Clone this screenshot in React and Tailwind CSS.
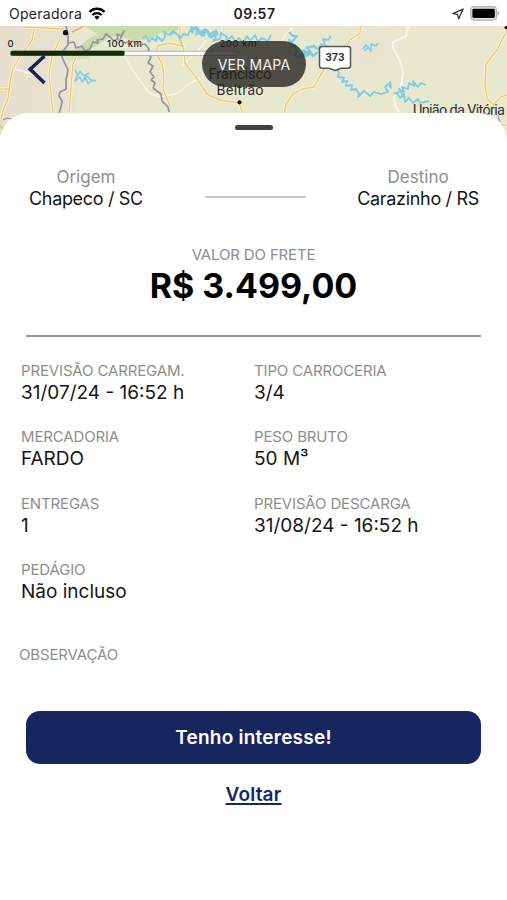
const details = [
  { label: "PREVISÃO CARREGAM.", value: "31/07/24 - 16:52 h" },
  { label: "TIPO CARROCERIA", value: "3/4" },
  { label: "MERCADORIA", value: "FARDO" },
  { label: "PESO BRUTO", value: "50 M³" },
  { label: "ENTREGAS", value: "1" },
  { label: "PREVISÃO DESCARGA", value: "31/08/24 - 16:52 h" },
  { label: "PEDÁGIO", value: "Não incluso" },
];

const highways = [
  "M24 27L45 28L64 29",
  "M34 29L32 40L28 46L21 55L13 68L10 82L8 99L4 108L1 119",
  "M0 89H10",
  "M60 39L52 56L49 75L51 94L53 114",
  "M79 50L73 64L71 87L69 114",
  "M181 20L179 41L183 46L169 43L157 46L157 55L162 64L164 76L163 89L170 106",
  "M181 40L184 51L185 63L198 80L207 94L220 100L239 103L243 113",
  "M330 63L323 71L314 87L302 89L293 94L286 104L284 114",
  "M361 22L360 33L350 40L346 48",
  "M507 30L497 50L486 64L485 84L487 98L493 105L501 97L507 95",
  "M507 125H501",
];

function StatusBar() {
  return (
    <div className="h-[26px] pt-[1px] bg-white grid grid-cols-3 items-center pl-[9px] pr-[7px] text-[#1c1c1c]">
      <div className="flex items-center gap-[6px]">
        <span className="text-[14px] tracking-[0.02em]">Operadora</span>
        <svg width="18" height="13" viewBox="0 0 18 14" fill="none" stroke="#000" strokeWidth="2.5">
          <path d="M0.9 5.2 A11.6 11.6 0 0 1 17.1 5.2" />
          <path d="M4 8.6 A7.2 7.2 0 0 1 14 8.6" />
          <path d="M9 13.8 L6.2 10.9 A4 4 0 0 1 11.8 10.9 Z" fill="#000" stroke="none" />
        </svg>
      </div>
      <span className="text-center text-[14px] font-semibold tracking-[0.035em]">09:57</span>
      <div className="flex items-center justify-end gap-[6px]">
        <svg width="12" height="12" viewBox="0 0 12 12" fill="none" stroke="#333" strokeWidth="1.3" strokeLinejoin="round">
          <path d="M11.2 1 L0.9 5.6 L5.5 6.4 L6.7 10.8 Z" />
        </svg>
        <svg width="30" height="15" viewBox="0 0 30 15">
          <rect x="0.8" y="0.8" width="25.6" height="13.2" rx="3.4" fill="#e9e9e9" stroke="#b5b5b5" strokeWidth="1.4" />
          <rect x="2.4" y="2.7" width="22.4" height="9.4" rx="1.4" fill="#000" />
          <path d="M27.6 4.8 Q31 7.4 27.6 10 Z" fill="#a8a8a8" />
        </svg>
      </div>
    </div>
  );
}

function RouteMap() {
  return (
    <svg className="block" width="507" height="114" viewBox="0 26 507 114" fontFamily="Roboto, sans-serif">
      <defs>
        <linearGradient id="soil" x1="0" x2="1" y1="0" y2="0">
          <stop offset="0" stopColor="#e7decd" />
          <stop offset="0.75" stopColor="#e8e1cf" />
          <stop offset="1" stopColor="#e8e8cf" />
        </linearGradient>
        <radialGradient id="hill">
          <stop offset="0" stopColor="#e8e1d1" />
          <stop offset="1" stopColor="#e8e8cf" />
        </radialGradient>
      </defs>
      <rect y="26" width="507" height="114" fill="#e8e8cf" />
      <rect y="26" width="84" height="114" fill="url(#soil)" />
      <ellipse cx="370" cy="50" rx="42" ry="34" fill="url(#hill)" />
      <path d="M84 26H184L176 31L160 33L149 39L141 40L134 43L126 38L118 36L108 38L98 45L86 51L76 50L88 39L98 34Z" fill="#cadbac" />
      <path d="M64 52L78 50L90 55L88 59L66 60Z" fill="#d5e2b8" />

      {/* secondary roads */}
      <g fill="none" stroke="#f8f6ee" strokeWidth="1.4" strokeLinejoin="round">
        <path d="M15 69L32 74L52 86" />
        <path d="M124 55L132 69L141 82L149 93L160 97L176 94L192 82L200 78" />
        <path d="M182 66L200 48L206 40" />
        <path d="M292 28L283 38L281 44L300 70" />
        <path d="M408 26L406 36L393 42L393 48L400 60L403 72L401 88L394 97L396 107L401 114" strokeWidth="2" />
      </g>

      {/* highways, light casing under a yellow core */}
      <g fill="none" stroke="#faf5e4" strokeWidth="3" strokeLinejoin="round">
        {highways.map((d) => <path key={d} d={d} />)}
      </g>
      <g fill="none" stroke="#f2c969" strokeWidth="1.4" strokeLinejoin="round">
        {highways.map((d) => <path key={d} d={d} />)}
      </g>
      <path d="M72 32L84 26" fill="none" stroke="#eba680" strokeWidth="1.5" />

      {/* rivers */}
      <g fill="none" stroke="#7fcbe4" strokeWidth="1.8" strokeLinejoin="round">
        <path d="M143 38L146 36L149 42L152 38L156 41L157 36L162 41L165 37L164 32L169 35L173 31L177 34" />
        <path d="M170 35L174 32L178 35L180 39L183 34L188 35L190 30L193 33L191 27L197 29L196 35L201 31L204 36L206 29L209 36L213 32L216 38L213 41L220 39L221 33L227 37L226 42L232 36L235 41L239 38L243 43L247 36L250 41L255 35L258 42L262 38L268 41L271 35" />
        <path d="M192 31L196 27L202 35L204 30L208 32L211 37L217 34L215 30" strokeWidth="3" />
        <path d="M289 32L293 36L297 36L292 42L289 40L291 47L295 45L297 52L294 55L302 57L304 50L308 55L312 52" strokeWidth="2.2" />
        <path d="M303 50L306 56L309 50L313 56L318 52M306 48L314 46L317 49" strokeWidth="2.4" />
        <path d="M318 50L321 44L325 45L323 39L328 40L331 36" />
        <path d="M75 70L78 75L75 81L80 77L82 82L86 78L88 84L92 80L96 81M76 78L80 71L84 76L89 73M83 79L87 76L93 82" strokeWidth="1.5" />
        <path d="M363 49L366 45L371 51L371 44L376 46L378 43M364 51L369 47" strokeWidth="1.5" />
        <path d="M337 69L339 73L338 77L344 78L342 82L347 81L346 86L352 85L351 90L356 89L359 94L358 97L364 91L370 96L374 92L381 94L388 92L385 87L388 84L391 88L390 81" />
        <path d="M393 93L397 94L400 90L404 92L402 87L408 89L409 83L414 86L413 81L418 87L421 83L426 85" />
        <path d="M396 92L400 98L404 94L405 102L409 98L413 103L418 99L420 103L429 101M399 88L405 99" />
      </g>

      {/* state borders */}
      <g fill="none" stroke="#94929a" strokeWidth="1.7" strokeLinejoin="round">
        <path d="M66 26L68 34L68 45L63 51L62 57L68 70L66 80L66 89L60 92L59 96L62 101L61 107L59 113" />
        <path d="M68 43L74 42L76 48L82 46L85 51L90 49L93 42L98 43L97 40L103 39L106 34L110 37L113 40L118 39L117 34L121 36L124 31L120 40L116 44" />
        <path d="M120 40L126 43L133 41L138 45L145 44L149 49L147 53L151 57L148 63L153 66L150 72L154 77L151 80L155 83L153 88L161 94L162 101L168 107L169 112" />
        <path d="M3 120L7 118L12 119M498 116L500 122" strokeWidth="1.2" />
      </g>

      <path d="M0 126L3 129" stroke="#c7dc50" strokeWidth="2" />
      <circle cx="65.5" cy="32.7" r="2.6" fill="#111" />
      <circle cx="239.5" cy="102.3" r="2.1" fill="#111" />
      <circle cx="506" cy="27.5" r="1.5" fill="#111" />

      <g fill="#2f2f2b" fontSize="14.5" stroke="#f1f0dd" strokeWidth="1" paintOrder="stroke" textAnchor="middle">
        <text x="240" y="78.5" fill="#000" textLength="63">Francisco</text>
        <text x="240" y="95" textLength="47">Beltrão</text>
        <text x="459" y="115" textLength="92">União da Vitória</text>
      </g>

      {/* highway shield */}
      <path d="M322 46.5H348Q350.5 46.5 350.5 49V66Q350.5 68 348 68.2L341 68.2L335 70.5L329 68.2L322 68.2Q319.5 68 319.5 66V49Q319.5 46.5 322 46.5Z" fill="#fff" stroke="#55555a" strokeWidth="1.5" />
      <text x="335" y="61.3" fontSize="11" fontWeight="700" fill="#333" textAnchor="middle" textLength="19">373</text>

      {/* scale bar */}
      <rect x="11" y="51.2" width="227" height="4.2" rx="2" fill="#fff" stroke="#aaaca4" strokeWidth="0.9" />
      <rect x="10.5" y="50.8" width="114" height="5" rx="1.5" fill="#122b0c" />
      <g fontFamily="Inter, sans-serif" fontSize="9.5" fontWeight="500" fill="#20231d" stroke="#eceddb" strokeWidth="0.8" paintOrder="stroke">
        <text x="7.5" y="47">0</text>
        <text x="107" y="47" textLength="35">100 km</text>
        <text x="219.5" y="47" textLength="37">200 km</text>
      </g>
    </svg>
  );
}

function Place({ label, name }) {
  return (
    <div className="text-center leading-[21px]">
      <p className="text-[17px] text-[#8e8e8e]">{label}</p>
      <p className="text-[18px] tracking-[-0.018em] text-[#151515]">{name}</p>
    </div>
  );
}

function Detail({ label, value }) {
  return (
    <div className="h-[66.4px]">
      <p className="text-[15px] leading-[21px] tracking-[-0.01em] text-[#8e8e8e]">{label}</p>
      <p className="text-[19px] leading-[23px] text-[#151515]">{value}</p>
    </div>
  );
}

export default function App() {
  return (
    <div className="relative w-[507px] h-[900px] overflow-hidden bg-white font-['Inter',sans-serif]">
      <StatusBar />
      <RouteMap />

      {/* Map controls */}
      <button aria-label="Voltar" className="absolute left-[26px] top-[54px]">
        <svg width="22" height="32" viewBox="0 0 22 32" fill="none" stroke="#14235c" strokeWidth="3.6">
          <path d="M18.5 2L4.200 15.2L18.5 29" />
        </svg>
      </button>
      <button className="absolute left-[202px] top-[41px] w-[104px] h-[46px] rounded-full bg-[#252523]/80 text-[#f2f2f2] text-[14px] tracking-[0.015em]">
        VER MAPA
      </button>

      {/* Freight sheet */}
      <main className="relative -mt-[27px] h-[787px] rounded-t-[28px] bg-white">
        <div className="flex justify-center pt-[12px]">
          <div className="w-[38px] h-[5px] rounded-full bg-[#414141]" />
        </div>

        <div className="flex justify-between items-center mt-[37px] pl-[29px] pr-[28px]">
          <Place label="Origem" name="Chapeco / SC" />
          <div className="w-[101px] h-[2px] mt-[18px] ml-[10px] bg-[#c9c9c9]" />
          <Place label="Destino" name="Carazinho / RS" />
        </div>

        <div className="text-center mt-[35px]">
          <p className="text-[15px] leading-[22px] tracking-[-0.01em] text-[#8e8e8e]">VALOR DO FRETE</p>
          <p className="text-[34px] leading-[39px] font-bold text-black">R$ 3.499,00</p>
        </div>

        <hr className="mx-[26px] mt-[30px] border-0 h-[2px] bg-[#999]" />

        <div className="grid grid-cols-[233px_1fr] pl-[21px] mt-[23px]">
          {details.map((d) => (
            <Detail key={d.label} label={d.label} value={d.value} />
          ))}
        </div>

        <p className="ml-[19px] mt-[18px] text-[15px] leading-[21px] tracking-[-0.01em] text-[#8e8e8e]">OBSERVAÇÃO</p>

        <div className="flex flex-col items-center px-[26px] mt-[46px]">
          <button className="w-full h-[53px] pt-[2px] rounded-[14px] bg-[#18265f] text-white text-[19px] font-semibold tracking-[0.012em]">
            Tenho interesse!
          </button>
          <button className="mt-[18px] leading-[25px] text-[19px] font-semibold tracking-[0.01em] text-[#18265f] underline underline-offset-2 decoration-2">
            Voltar
          </button>
        </div>
      </main>
    </div>
  );
}
